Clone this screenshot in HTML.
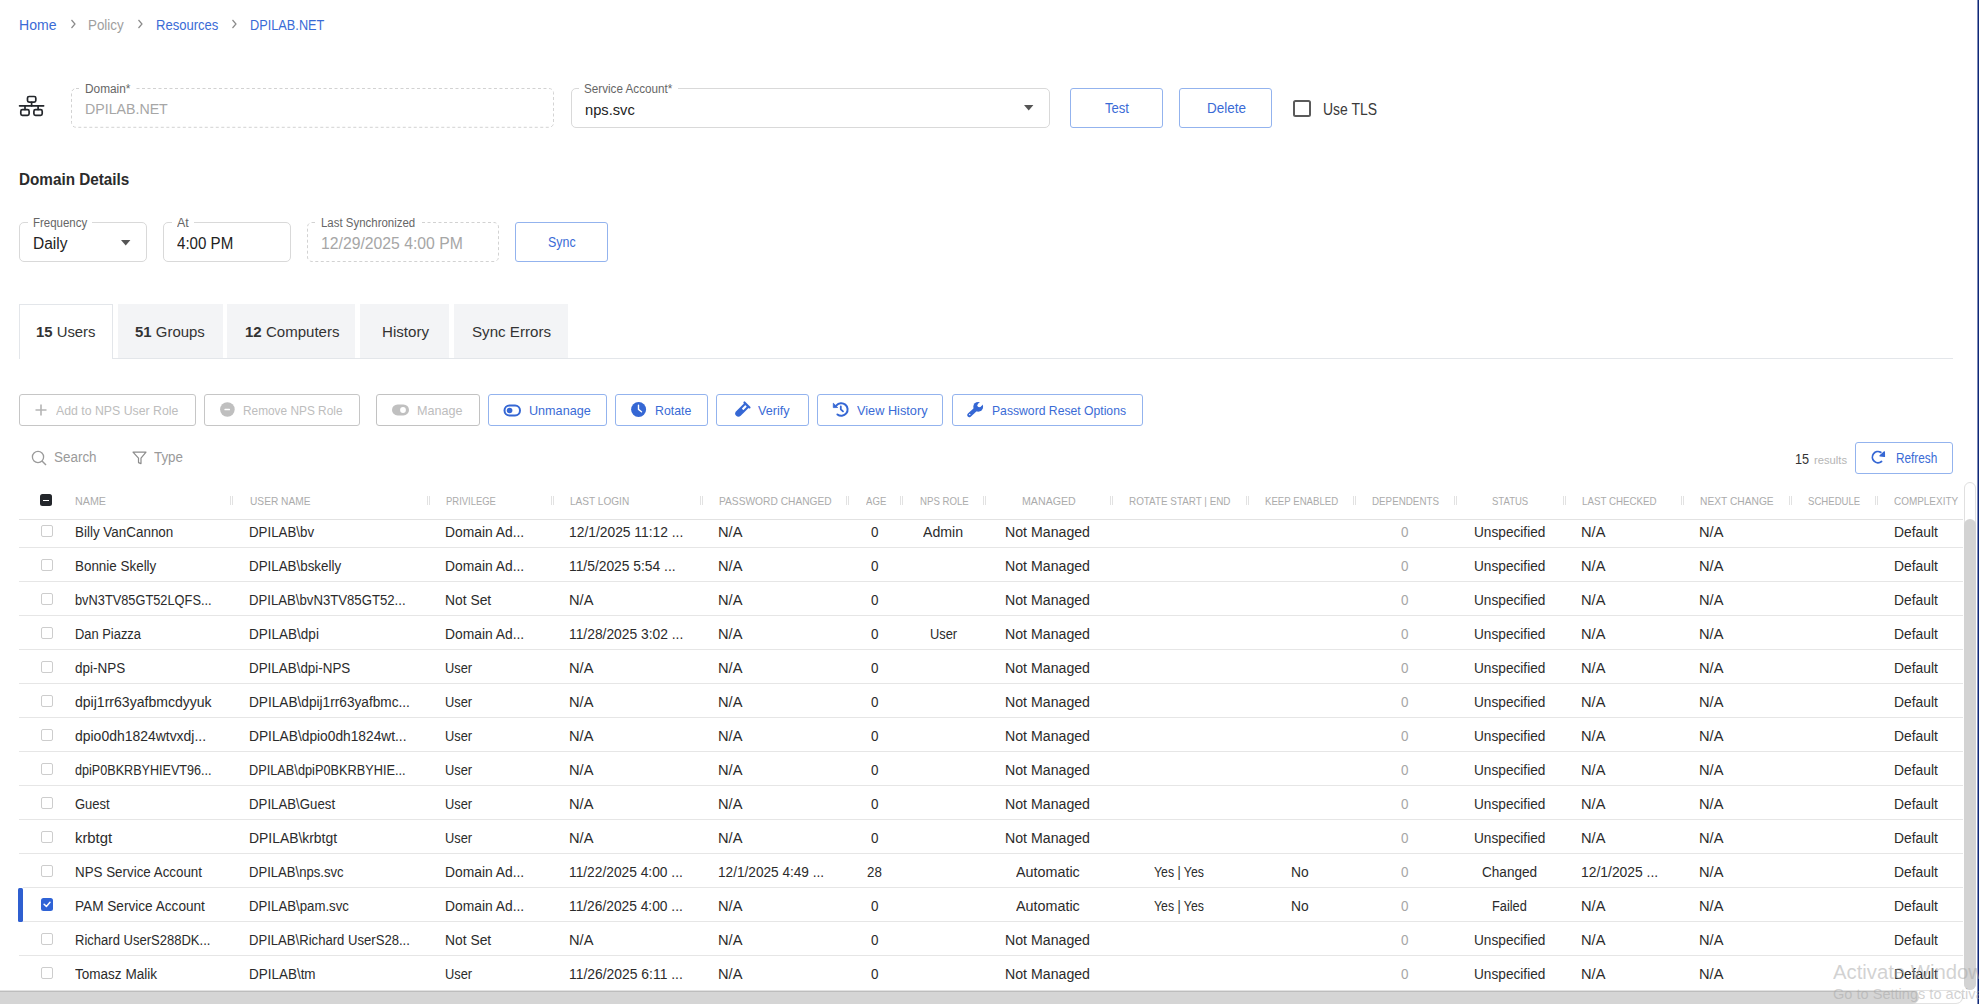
<!DOCTYPE html>
<html><head><meta charset="utf-8"><style>
html,body{margin:0;padding:0;background:#fff;}
body{width:1979px;height:1004px;overflow:hidden;position:relative;font-family:"Liberation Sans", sans-serif;}
b{font-weight:700}
</style></head><body>
<div id="t0" style="position:absolute;left:19.20px;top:17.95px;font-size:14px;line-height:14px;color:#3a6bd6;font-weight:400;white-space:nowrap;transform:scaleX(1.0038);transform-origin:0 0;">Home</div>
<div id="t1" style="position:absolute;left:88.00px;top:17.95px;font-size:14px;line-height:14px;color:#9e9e9e;font-weight:400;white-space:nowrap;transform:scaleX(0.9556);transform-origin:0 0;">Policy</div>
<div id="t2" style="position:absolute;left:155.50px;top:17.95px;font-size:14px;line-height:14px;color:#3a6bd6;font-weight:400;white-space:nowrap;transform:scaleX(0.9324);transform-origin:0 0;">Resources</div>
<div id="t3" style="position:absolute;left:249.50px;top:17.95px;font-size:14px;line-height:14px;color:#3a6bd6;font-weight:400;white-space:nowrap;transform:scaleX(0.9106);transform-origin:0 0;">DPILAB.NET</div>
<svg style="position:absolute;left:69px;top:18px" width="8" height="12" viewBox="0 0 8 12"><path d="M2.5 2 L6 6 L2.5 10" fill="none" stroke="#8a8a8a" stroke-width="1.2"/></svg>
<svg style="position:absolute;left:136px;top:18px" width="8" height="12" viewBox="0 0 8 12"><path d="M2.5 2 L6 6 L2.5 10" fill="none" stroke="#8a8a8a" stroke-width="1.2"/></svg>
<svg style="position:absolute;left:229.5px;top:18px" width="8" height="12" viewBox="0 0 8 12"><path d="M2.5 2 L6 6 L2.5 10" fill="none" stroke="#8a8a8a" stroke-width="1.2"/></svg>
<svg style="position:absolute;left:14px;top:90px" width="36" height="32" viewBox="0 0 36 32"><g fill="none" stroke="#23262b" stroke-width="1.7" stroke-linecap="round" transform="translate(-14,-90)">
<rect x="27.5" y="96.5" width="8.3" height="5.6" rx="1.6"/>
<line x1="31.6" y1="102.3" x2="31.6" y2="105.8"/>
<line x1="19.6" y1="105.8" x2="43.6" y2="105.8"/>
<line x1="25" y1="105.8" x2="25" y2="109.4"/>
<line x1="38.1" y1="105.8" x2="38.1" y2="109.4"/>
<rect x="20.8" y="109.6" width="8.3" height="5.7" rx="1.6"/>
<rect x="33.9" y="109.6" width="8.3" height="5.7" rx="1.6"/>
</g></svg>
<svg style="position:absolute;left:70.7px;top:88px" width="483.09999999999997" height="39.8" viewBox="0 0 483.09999999999997 39.8"><rect x="0.5" y="0.5" width="482.1" height="38.8" rx="4.5" fill="none" stroke="#d2d2d2" stroke-width="1" stroke-dasharray="3 2.5"/></svg>
<div style="position:absolute;left:80.4px;top:86px;width:55.400000000000006px;height:5px;box-sizing:border-box;background:#fff;"></div>
<div id="t4" style="position:absolute;left:85.40px;top:82.84px;font-size:12px;line-height:12px;color:#666;font-weight:400;white-space:nowrap;transform:scaleX(0.9863);transform-origin:0 0;">Domain*</div>
<div id="t5" style="position:absolute;left:85.40px;top:101.30px;font-size:15px;line-height:15px;color:#a6a6a6;font-weight:400;white-space:nowrap;transform:scaleX(0.9459);transform-origin:0 0;">DPILAB.NET</div>
<div style="position:absolute;left:570.5px;top:88px;width:479.0999999999999px;height:39.8px;box-sizing:border-box;border:1px solid #d9d9d9;border-radius:5px;"></div>
<div style="position:absolute;left:579.3px;top:86px;width:98.29999999999995px;height:5px;box-sizing:border-box;background:#fff;"></div>
<div id="t6" style="position:absolute;left:584.30px;top:82.84px;font-size:12px;line-height:12px;color:#666;font-weight:400;white-space:nowrap;transform:scaleX(0.9733);transform-origin:0 0;">Service Account*</div>
<div id="t7" style="position:absolute;left:584.80px;top:101.50px;font-size:15px;line-height:15px;color:#222;font-weight:400;white-space:nowrap;transform:scaleX(0.9792);transform-origin:0 0;">nps.svc</div>
<svg style="position:absolute;left:1024px;top:105px" width="10" height="6" viewBox="0 0 10 6"><path d="M0 0 L9.4 0 L4.7 5.4 Z" fill="#555"/></svg>
<div style="position:absolute;left:1070px;top:88px;width:93px;height:40px;box-sizing:border-box;border:1.3px solid #93b3ee;border-radius:3px;"></div>
<div id="t8" style="position:absolute;left:1105.00px;top:100.75px;font-size:14px;line-height:14px;color:#3a6bd6;font-weight:400;white-space:nowrap;transform:scaleX(0.9343);transform-origin:0 0;">Test</div>
<div style="position:absolute;left:1179px;top:88px;width:93px;height:40px;box-sizing:border-box;border:1.3px solid #93b3ee;border-radius:3px;"></div>
<div id="t9" style="position:absolute;left:1206.50px;top:100.75px;font-size:14px;line-height:14px;color:#3a6bd6;font-weight:400;white-space:nowrap;transform:scaleX(0.9637);transform-origin:0 0;">Delete</div>
<div style="position:absolute;left:1293px;top:100px;width:17.59999999999991px;height:17.400000000000006px;box-sizing:border-box;border:2px solid #5a5a5a;border-radius:2.5px;"></div>
<div id="t10" style="position:absolute;left:1322.80px;top:101.99px;font-size:15.6px;line-height:15.6px;color:#3a3a3a;font-weight:400;white-space:nowrap;transform:scaleX(0.8942);transform-origin:0 0;">Use TLS</div>
<div id="t11" style="position:absolute;left:19.10px;top:172.06px;font-size:16px;line-height:16px;color:#2b2b2b;font-weight:700;white-space:nowrap;transform:scaleX(0.9542);transform-origin:0 0;">Domain Details</div>
<div style="position:absolute;left:19px;top:222px;width:128px;height:40px;box-sizing:border-box;border:1px solid #d9d9d9;border-radius:5px;"></div>
<div style="position:absolute;left:27.700000000000003px;top:220px;width:64.2px;height:5px;box-sizing:border-box;background:#fff;"></div>
<div id="t12" style="position:absolute;left:32.70px;top:216.84px;font-size:12px;line-height:12px;color:#666;font-weight:400;white-space:nowrap;transform:scaleX(0.9559);transform-origin:0 0;">Frequency</div>
<div id="t13" style="position:absolute;left:32.70px;top:235.76px;font-size:16px;line-height:16px;color:#222;font-weight:400;white-space:nowrap;transform:scaleX(0.9701);transform-origin:0 0;">Daily</div>
<svg style="position:absolute;left:121px;top:239.7px" width="10" height="6" viewBox="0 0 10 6"><path d="M0 0 L9.4 0 L4.7 5.4 Z" fill="#555"/></svg>
<div style="position:absolute;left:163px;top:222px;width:128px;height:40px;box-sizing:border-box;border:1px solid #d9d9d9;border-radius:5px;"></div>
<div style="position:absolute;left:172px;top:220px;width:21.80000000000001px;height:5px;box-sizing:border-box;background:#fff;"></div>
<div id="t14" style="position:absolute;left:177.00px;top:216.84px;font-size:12px;line-height:12px;color:#666;font-weight:400;white-space:nowrap;transform:scaleX(1.0402);transform-origin:0 0;">At</div>
<div id="t15" style="position:absolute;left:177.00px;top:235.76px;font-size:16px;line-height:16px;color:#222;font-weight:400;white-space:nowrap;transform:scaleX(0.9431);transform-origin:0 0;">4:00 PM</div>
<svg style="position:absolute;left:307px;top:222px" width="192" height="40" viewBox="0 0 192 40"><rect x="0.5" y="0.5" width="191.0" height="39.0" rx="4.5" fill="none" stroke="#d2d2d2" stroke-width="1" stroke-dasharray="3 2.5"/></svg>
<div style="position:absolute;left:316.2px;top:220px;width:104.19999999999999px;height:5px;box-sizing:border-box;background:#fff;"></div>
<div id="t16" style="position:absolute;left:321.20px;top:216.84px;font-size:12px;line-height:12px;color:#666;font-weight:400;white-space:nowrap;transform:scaleX(0.9541);transform-origin:0 0;">Last Synchronized</div>
<div id="t17" style="position:absolute;left:321.20px;top:235.76px;font-size:16px;line-height:16px;color:#a6a6a6;font-weight:400;white-space:nowrap;transform:scaleX(0.9840);transform-origin:0 0;">12/29/2025 4:00 PM</div>
<div style="position:absolute;left:515px;top:222px;width:93px;height:40px;box-sizing:border-box;border:1.3px solid #93b3ee;border-radius:3px;"></div>
<div id="t18" style="position:absolute;left:547.80px;top:234.65px;font-size:14px;line-height:14px;color:#3a6bd6;font-weight:400;white-space:nowrap;transform:scaleX(0.8867);transform-origin:0 0;">Sync</div>
<div style="position:absolute;left:19px;top:357.6px;width:1934px;height:1.1999999999999886px;box-sizing:border-box;background:#e3e6ea;"></div>
<div style="position:absolute;left:19.4px;top:304.4px;width:94.1px;height:54.60000000000002px;box-sizing:border-box;background:#fff;border:1px solid #e3e6ea;border-bottom:none;"></div>
<div style="position:absolute;left:117.9px;top:304.4px;width:104.69999999999999px;height:53.60000000000002px;box-sizing:border-box;background:#f3f4f6;"></div>
<div style="position:absolute;left:227px;top:304.4px;width:128.39999999999998px;height:53.60000000000002px;box-sizing:border-box;background:#f3f4f6;"></div>
<div style="position:absolute;left:360px;top:304.4px;width:89.30000000000001px;height:53.60000000000002px;box-sizing:border-box;background:#f3f4f6;"></div>
<div style="position:absolute;left:454px;top:304.4px;width:113.5px;height:53.60000000000002px;box-sizing:border-box;background:#f3f4f6;"></div>
<div id="t19" style="position:absolute;left:36.10px;top:324.55px;font-size:14px;line-height:14px;color:#333;font-weight:400;white-space:nowrap;transform:scaleX(1.0619);transform-origin:0 0;"><b>15</b> Users</div>
<div id="t20" style="position:absolute;left:135.00px;top:324.55px;font-size:14px;line-height:14px;color:#333;font-weight:400;white-space:nowrap;transform:scaleX(1.0674);transform-origin:0 0;"><b>51</b> Groups</div>
<div id="t21" style="position:absolute;left:244.50px;top:324.55px;font-size:14px;line-height:14px;color:#333;font-weight:400;white-space:nowrap;transform:scaleX(1.0746);transform-origin:0 0;"><b>12</b> Computers</div>
<div id="t22" style="position:absolute;left:381.50px;top:324.55px;font-size:14px;line-height:14px;color:#333;font-weight:400;white-space:nowrap;transform:scaleX(1.0789);transform-origin:0 0;">History</div>
<div id="t23" style="position:absolute;left:471.50px;top:324.55px;font-size:14px;line-height:14px;color:#333;font-weight:400;white-space:nowrap;transform:scaleX(1.0803);transform-origin:0 0;">Sync Errors</div>
<div style="position:absolute;left:19px;top:394px;width:177px;height:32px;box-sizing:border-box;border:1.3px solid #c6c6c6;border-radius:3px;"></div>
<div id="t24" style="position:absolute;left:56.40px;top:404.00px;font-size:13px;line-height:13px;color:#bdbdbd;font-weight:400;white-space:nowrap;transform:scaleX(0.9463);transform-origin:0 0;">Add to NPS User Role</div>
<svg style="position:absolute;left:34px;top:403px" width="14" height="14" viewBox="0 0 14 14"><path d="M7 1.5 V12.5 M1.5 7 H12.5" stroke="#b5b5b5" stroke-width="1.6" fill="none"/></svg>
<div style="position:absolute;left:204px;top:394px;width:156px;height:32px;box-sizing:border-box;border:1.3px solid #c6c6c6;border-radius:3px;"></div>
<svg style="position:absolute;left:218px;top:400px" width="20" height="20" viewBox="0 0 20 20"><circle cx="9.4" cy="9.5" r="7.3" fill="#bfbfbf"/><rect x="6.4" y="8.7" width="5.6" height="1.6" rx="0.6" fill="#fff"/></svg>
<div id="t25" style="position:absolute;left:243.40px;top:404.00px;font-size:13px;line-height:13px;color:#bdbdbd;font-weight:400;white-space:nowrap;transform:scaleX(0.9119);transform-origin:0 0;">Remove NPS Role</div>
<div style="position:absolute;left:376px;top:394px;width:104px;height:32px;box-sizing:border-box;border:1.3px solid #c2c2c2;border-radius:3px;"></div>
<svg style="position:absolute;left:391px;top:403.5px" width="19" height="12" viewBox="0 0 19 12"><rect x="1" y="0.4" width="17" height="11.1" rx="5.55" fill="#c0c0c0"/><circle cx="12" cy="6" r="2.9" fill="#fff"/></svg>
<div id="t26" style="position:absolute;left:417.30px;top:404.00px;font-size:13px;line-height:13px;color:#bdbdbd;font-weight:400;white-space:nowrap;transform:scaleX(0.9684);transform-origin:0 0;">Manage</div>
<div style="position:absolute;left:488px;top:394px;width:119px;height:32px;box-sizing:border-box;border:1.3px solid #93b3ee;border-radius:3px;"></div>
<svg style="position:absolute;left:503px;top:403.5px" width="19" height="13" viewBox="0 0 19 13"><rect x="1.5" y="1.5" width="15.5" height="10" rx="5" fill="none" stroke="#3567d4" stroke-width="2"/><circle cx="6.6" cy="6.5" r="2.8" fill="#3567d4"/></svg>
<div id="t27" style="position:absolute;left:528.80px;top:404.00px;font-size:13px;line-height:13px;color:#3a6bd6;font-weight:400;white-space:nowrap;transform:scaleX(0.9700);transform-origin:0 0;">Unmanage</div>
<div style="position:absolute;left:615px;top:394px;width:93px;height:32px;box-sizing:border-box;border:1.3px solid #93b3ee;border-radius:3px;"></div>
<svg style="position:absolute;left:624px;top:398px" width="32" height="24" viewBox="0 0 32 24"><circle cx="14.6" cy="11.5" r="7.5" fill="#3567d4"/><path d="M14.5 7.1 V11.4 L17.5 13.7" stroke="#fff" stroke-width="1.4" fill="none" stroke-linecap="round" stroke-linejoin="round"/></svg>
<div id="t28" style="position:absolute;left:654.70px;top:404.00px;font-size:13px;line-height:13px;color:#3a6bd6;font-weight:400;white-space:nowrap;transform:scaleX(0.9475);transform-origin:0 0;">Rotate</div>
<div style="position:absolute;left:716px;top:394px;width:93px;height:32px;box-sizing:border-box;border:1.3px solid #93b3ee;border-radius:3px;"></div>
<svg style="position:absolute;left:728px;top:398px" width="32" height="24" viewBox="0 0 32 24"><g transform="translate(19,6.9) rotate(45)"><rect x="-4.6" y="-1" width="9.2" height="2.1" rx="1" fill="#3567d4"/><path d="M-3.2 0 V12.1 A3.2 3.2 0 0 0 3.2 12.1 V0 Z" fill="#3567d4"/><rect x="-1.1" y="1.3" width="2.2" height="5" rx="0.6" fill="#fff"/></g></svg>
<div id="t29" style="position:absolute;left:758.40px;top:404.00px;font-size:13px;line-height:13px;color:#3a6bd6;font-weight:400;white-space:nowrap;transform:scaleX(0.9718);transform-origin:0 0;">Verify</div>
<div style="position:absolute;left:817px;top:394px;width:126px;height:32px;box-sizing:border-box;border:1.3px solid #93b3ee;border-radius:3px;"></div>
<svg style="position:absolute;left:826px;top:398px" width="32" height="24" viewBox="0 0 32 24"><path d="M11.42 16.46 A6.3 6.3 0 1 0 10.47 7.45" fill="none" stroke="#3567d4" stroke-width="2" stroke-linecap="round"/><path d="M7.3 5.2 L7.3 9.6 L11.7 9.5 Z" fill="#3567d4" stroke="#3567d4" stroke-width="0.8" stroke-linejoin="round"/><path d="M14.8 8.4 V11.3 L17 13.4" fill="none" stroke="#3567d4" stroke-width="1.8" stroke-linecap="round" stroke-linejoin="round"/></svg>
<div id="t30" style="position:absolute;left:856.70px;top:404.00px;font-size:13px;line-height:13px;color:#3a6bd6;font-weight:400;white-space:nowrap;transform:scaleX(0.9790);transform-origin:0 0;">View History</div>
<div style="position:absolute;left:952px;top:394px;width:191px;height:32px;box-sizing:border-box;border:1.3px solid #93b3ee;border-radius:3px;"></div>
<svg style="position:absolute;left:960px;top:398px" width="32" height="24" viewBox="0 0 32 24"><circle cx="18.2" cy="8.8" r="4.9" fill="#3567d4"/><line x1="9.3" y1="17.1" x2="16" y2="11" stroke="#3567d4" stroke-width="4.2" stroke-linecap="round"/><circle cx="19.3" cy="7.3" r="1.9" fill="#fff"/><line x1="19.3" y1="7.3" x2="24" y2="2.6" stroke="#fff" stroke-width="3.8"/><circle cx="9.7" cy="16.5" r="0.8" fill="#dfe7fa"/></svg>
<div id="t31" style="position:absolute;left:991.70px;top:404.00px;font-size:13px;line-height:13px;color:#3a6bd6;font-weight:400;white-space:nowrap;transform:scaleX(0.9366);transform-origin:0 0;">Password Reset Options</div>
<svg style="position:absolute;left:31px;top:450px" width="17" height="17" viewBox="0 0 17 17"><circle cx="7" cy="7" r="5.6" fill="none" stroke="#9a9a9a" stroke-width="1.3"/><path d="M11 11 L15 15" stroke="#9a9a9a" stroke-width="1.4"/></svg>
<div id="t32" style="position:absolute;left:54.40px;top:449.85px;font-size:14px;line-height:14px;color:#9a9a9a;font-weight:400;white-space:nowrap;transform:scaleX(0.9603);transform-origin:0 0;">Search</div>
<svg style="position:absolute;left:132px;top:451px" width="16" height="14" viewBox="0 0 16 14"><path d="M1 1.2 H14 L9 7.2 V12.6 L6.5 11.6 V7.2 Z" fill="none" stroke="#8c8c8c" stroke-width="1.2" stroke-linejoin="round"/></svg>
<div id="t33" style="position:absolute;left:153.90px;top:449.85px;font-size:14px;line-height:14px;color:#9a9a9a;font-weight:400;white-space:nowrap;transform:scaleX(0.9552);transform-origin:0 0;">Type</div>
<div id="t34" style="position:absolute;left:1795.00px;top:452.25px;font-size:14px;line-height:14px;color:#333;font-weight:400;white-space:nowrap;transform:scaleX(0.9051);transform-origin:0 0;">15</div>
<div id="t35" style="position:absolute;left:1813.80px;top:454.79px;font-size:11px;line-height:11px;color:#b5b5b5;font-weight:400;white-space:nowrap;transform:scaleX(1.0183);transform-origin:0 0;">results</div>
<div style="position:absolute;left:1854.5px;top:442.3px;width:98.79999999999995px;height:31.30000000000001px;box-sizing:border-box;border:1.3px solid #93b3ee;border-radius:3px;"></div>
<svg style="position:absolute;left:1864px;top:444px" width="32" height="26" viewBox="0 0 32 26"><path d="M17.52 17.55 A5.6 5.6 0 1 1 16.8 8.35" fill="none" stroke="#3567d4" stroke-width="1.8" stroke-linecap="round"/><path d="M16 11.8 L20.5 12.4 L20.4 7.8 Z" fill="#3567d4" stroke="#3567d4" stroke-width="1.2" stroke-linejoin="round"/></svg>
<div id="t36" style="position:absolute;left:1895.50px;top:451.35px;font-size:14px;line-height:14px;color:#3a6bd6;font-weight:400;white-space:nowrap;transform:scaleX(0.8423);transform-origin:0 0;">Refresh</div>
<div style="position:absolute;left:39.8px;top:494.1px;width:12.200000000000003px;height:12.399999999999977px;box-sizing:border-box;background:#23262b;border-radius:2.5px;"></div>
<div style="position:absolute;left:43px;top:499.5px;width:5.799999999999997px;height:1.5px;box-sizing:border-box;background:#fff;"></div>
<div id="t37" style="position:absolute;left:75.40px;top:495.99px;font-size:11px;line-height:11px;color:#ababab;font-weight:400;white-space:nowrap;transform:scaleX(0.9754);transform-origin:0 0;">NAME</div>
<div id="t38" style="position:absolute;left:249.60px;top:495.99px;font-size:11px;line-height:11px;color:#ababab;font-weight:400;white-space:nowrap;transform:scaleX(0.9250);transform-origin:0 0;">USER NAME</div>
<div id="t39" style="position:absolute;left:445.60px;top:495.99px;font-size:11px;line-height:11px;color:#ababab;font-weight:400;white-space:nowrap;transform:scaleX(0.8592);transform-origin:0 0;">PRIVILEGE</div>
<div id="t40" style="position:absolute;left:570.00px;top:495.99px;font-size:11px;line-height:11px;color:#ababab;font-weight:400;white-space:nowrap;transform:scaleX(0.9163);transform-origin:0 0;">LAST LOGIN</div>
<div id="t41" style="position:absolute;left:718.80px;top:495.99px;font-size:11px;line-height:11px;color:#ababab;font-weight:400;white-space:nowrap;transform:scaleX(0.9282);transform-origin:0 0;">PASSWORD CHANGED</div>
<div id="t42" style="position:absolute;left:865.50px;top:495.99px;font-size:11px;line-height:11px;color:#ababab;font-weight:400;white-space:nowrap;transform:scaleX(0.8737);transform-origin:0 0;">AGE</div>
<div id="t43" style="position:absolute;left:919.70px;top:495.99px;font-size:11px;line-height:11px;color:#ababab;font-weight:400;white-space:nowrap;transform:scaleX(0.8771);transform-origin:0 0;">NPS ROLE</div>
<div id="t44" style="position:absolute;left:1022.00px;top:495.99px;font-size:11px;line-height:11px;color:#ababab;font-weight:400;white-space:nowrap;transform:scaleX(0.9672);transform-origin:0 0;">MANAGED</div>
<div id="t45" style="position:absolute;left:1129.00px;top:495.99px;font-size:11px;line-height:11px;color:#ababab;font-weight:400;white-space:nowrap;transform:scaleX(0.8976);transform-origin:0 0;">ROTATE START | END</div>
<div id="t46" style="position:absolute;left:1264.80px;top:495.99px;font-size:11px;line-height:11px;color:#ababab;font-weight:400;white-space:nowrap;transform:scaleX(0.8760);transform-origin:0 0;">KEEP ENABLED</div>
<div id="t47" style="position:absolute;left:1372.00px;top:495.99px;font-size:11px;line-height:11px;color:#ababab;font-weight:400;white-space:nowrap;transform:scaleX(0.8911);transform-origin:0 0;">DEPENDENTS</div>
<div id="t48" style="position:absolute;left:1492.30px;top:495.99px;font-size:11px;line-height:11px;color:#ababab;font-weight:400;white-space:nowrap;transform:scaleX(0.8667);transform-origin:0 0;">STATUS</div>
<div id="t49" style="position:absolute;left:1582.00px;top:495.99px;font-size:11px;line-height:11px;color:#ababab;font-weight:400;white-space:nowrap;transform:scaleX(0.8864);transform-origin:0 0;">LAST CHECKED</div>
<div id="t50" style="position:absolute;left:1700.00px;top:495.99px;font-size:11px;line-height:11px;color:#ababab;font-weight:400;white-space:nowrap;transform:scaleX(0.9298);transform-origin:0 0;">NEXT CHANGE</div>
<div id="t51" style="position:absolute;left:1807.80px;top:495.99px;font-size:11px;line-height:11px;color:#ababab;font-weight:400;white-space:nowrap;transform:scaleX(0.8714);transform-origin:0 0;">SCHEDULE</div>
<div id="t52" style="position:absolute;left:1893.60px;top:495.99px;font-size:11px;line-height:11px;color:#ababab;font-weight:400;white-space:nowrap;transform:scaleX(0.9040);transform-origin:0 0;">COMPLEXITY</div>
<div style="position:absolute;left:229.5px;top:496px;width:1.0px;height:9px;box-sizing:border-box;background:#e2e2e2;"></div>
<div style="position:absolute;left:231.5px;top:496px;width:1.0px;height:9px;box-sizing:border-box;background:#e2e2e2;"></div>
<div style="position:absolute;left:426.6px;top:496px;width:1.0px;height:9px;box-sizing:border-box;background:#e2e2e2;"></div>
<div style="position:absolute;left:428.6px;top:496px;width:1.0px;height:9px;box-sizing:border-box;background:#e2e2e2;"></div>
<div style="position:absolute;left:551.0px;top:496px;width:1.0px;height:9px;box-sizing:border-box;background:#e2e2e2;"></div>
<div style="position:absolute;left:553.0px;top:496px;width:1.0px;height:9px;box-sizing:border-box;background:#e2e2e2;"></div>
<div style="position:absolute;left:699.9px;top:496px;width:1.0px;height:9px;box-sizing:border-box;background:#e2e2e2;"></div>
<div style="position:absolute;left:701.9px;top:496px;width:1.0px;height:9px;box-sizing:border-box;background:#e2e2e2;"></div>
<div style="position:absolute;left:846.3px;top:496px;width:1.0px;height:9px;box-sizing:border-box;background:#e2e2e2;"></div>
<div style="position:absolute;left:848.3px;top:496px;width:1.0px;height:9px;box-sizing:border-box;background:#e2e2e2;"></div>
<div style="position:absolute;left:900.3px;top:496px;width:1.0px;height:9px;box-sizing:border-box;background:#e2e2e2;"></div>
<div style="position:absolute;left:902.3px;top:496px;width:1.0px;height:9px;box-sizing:border-box;background:#e2e2e2;"></div>
<div style="position:absolute;left:983.4px;top:496px;width:1.0px;height:9px;box-sizing:border-box;background:#e2e2e2;"></div>
<div style="position:absolute;left:985.4px;top:496px;width:1.0px;height:9px;box-sizing:border-box;background:#e2e2e2;"></div>
<div style="position:absolute;left:1109.5px;top:496px;width:1.0px;height:9px;box-sizing:border-box;background:#e2e2e2;"></div>
<div style="position:absolute;left:1111.5px;top:496px;width:1.0px;height:9px;box-sizing:border-box;background:#e2e2e2;"></div>
<div style="position:absolute;left:1246.0px;top:496px;width:1.0px;height:9px;box-sizing:border-box;background:#e2e2e2;"></div>
<div style="position:absolute;left:1248.0px;top:496px;width:1.0px;height:9px;box-sizing:border-box;background:#e2e2e2;"></div>
<div style="position:absolute;left:1352.5px;top:496px;width:1.0px;height:9px;box-sizing:border-box;background:#e2e2e2;"></div>
<div style="position:absolute;left:1354.5px;top:496px;width:1.0px;height:9px;box-sizing:border-box;background:#e2e2e2;"></div>
<div style="position:absolute;left:1453.5px;top:496px;width:1.0px;height:9px;box-sizing:border-box;background:#e2e2e2;"></div>
<div style="position:absolute;left:1455.5px;top:496px;width:1.0px;height:9px;box-sizing:border-box;background:#e2e2e2;"></div>
<div style="position:absolute;left:1562.5px;top:496px;width:1.0px;height:9px;box-sizing:border-box;background:#e2e2e2;"></div>
<div style="position:absolute;left:1564.5px;top:496px;width:1.0px;height:9px;box-sizing:border-box;background:#e2e2e2;"></div>
<div style="position:absolute;left:1680.5px;top:496px;width:1.0px;height:9px;box-sizing:border-box;background:#e2e2e2;"></div>
<div style="position:absolute;left:1682.5px;top:496px;width:1.0px;height:9px;box-sizing:border-box;background:#e2e2e2;"></div>
<div style="position:absolute;left:1788.5px;top:496px;width:1.0px;height:9px;box-sizing:border-box;background:#e2e2e2;"></div>
<div style="position:absolute;left:1790.5px;top:496px;width:1.0px;height:9px;box-sizing:border-box;background:#e2e2e2;"></div>
<div style="position:absolute;left:1875.0px;top:496px;width:1.0px;height:9px;box-sizing:border-box;background:#e2e2e2;"></div>
<div style="position:absolute;left:1877.0px;top:496px;width:1.0px;height:9px;box-sizing:border-box;background:#e2e2e2;"></div>
<div style="position:absolute;left:19px;top:519px;width:1944px;height:1px;box-sizing:border-box;background:#e2e2e2;"></div>
<div style="position:absolute;left:40.9px;top:524.8px;width:12.0px;height:12.0px;box-sizing:border-box;border:1.3px solid #cdcdcd;border-radius:2px;"></div>
<div style="position:absolute;left:19px;top:547px;width:1944px;height:1px;box-sizing:border-box;background:#e6e6e6;"></div>
<div id="t53" style="position:absolute;left:74.70px;top:524.95px;font-size:14px;line-height:14px;color:#2b2b2b;font-weight:400;white-space:nowrap;transform:scaleX(0.9592);transform-origin:0 0;">Billy VanCannon</div>
<div id="t54" style="position:absolute;left:248.80px;top:524.95px;font-size:14px;line-height:14px;color:#2b2b2b;font-weight:400;white-space:nowrap;transform:scaleX(0.9506);transform-origin:0 0;">DPILAB\bv</div>
<div id="t55" style="position:absolute;left:445.00px;top:524.95px;font-size:14px;line-height:14px;color:#2b2b2b;font-weight:400;white-space:nowrap;transform:scaleX(0.9881);transform-origin:0 0;">Domain Ad...</div>
<div id="t56" style="position:absolute;left:569.20px;top:524.95px;font-size:14px;line-height:14px;color:#2b2b2b;font-weight:400;white-space:nowrap;transform:scaleX(0.9876);transform-origin:0 0;">12/1/2025 11:12 ...</div>
<div id="t57" style="position:absolute;left:718.30px;top:524.95px;font-size:14px;line-height:14px;color:#2b2b2b;font-weight:400;white-space:nowrap;transform:scaleX(1.0452);transform-origin:0 0;">N/A</div>
<div id="t58" style="position:absolute;left:870.85px;top:524.95px;font-size:14px;line-height:14px;color:#2b2b2b;font-weight:400;white-space:nowrap;transform:scaleX(0.9619);transform-origin:0 0;">0</div>
<div id="t59" style="position:absolute;left:923.05px;top:524.95px;font-size:14px;line-height:14px;color:#2b2b2b;font-weight:400;white-space:nowrap;transform:scaleX(1.0104);transform-origin:0 0;">Admin</div>
<div id="t60" style="position:absolute;left:1005.40px;top:524.95px;font-size:14px;line-height:14px;color:#2b2b2b;font-weight:400;white-space:nowrap;transform:scaleX(1.0112);transform-origin:0 0;">Not Managed</div>
<div id="t61" style="position:absolute;left:1400.85px;top:524.95px;font-size:14px;line-height:14px;color:#a6a6a6;font-weight:400;white-space:nowrap;transform:scaleX(0.9619);transform-origin:0 0;">0</div>
<div id="t62" style="position:absolute;left:1473.50px;top:524.95px;font-size:14px;line-height:14px;color:#2b2b2b;font-weight:400;white-space:nowrap;transform:scaleX(0.9760);transform-origin:0 0;">Unspecified</div>
<div id="t63" style="position:absolute;left:1581.30px;top:524.95px;font-size:14px;line-height:14px;color:#2b2b2b;font-weight:400;white-space:nowrap;transform:scaleX(1.0452);transform-origin:0 0;">N/A</div>
<div id="t64" style="position:absolute;left:1699.30px;top:524.95px;font-size:14px;line-height:14px;color:#2b2b2b;font-weight:400;white-space:nowrap;transform:scaleX(1.0452);transform-origin:0 0;">N/A</div>
<div id="t65" style="position:absolute;left:1893.60px;top:524.95px;font-size:14px;line-height:14px;color:#2b2b2b;font-weight:400;white-space:nowrap;transform:scaleX(0.9896);transform-origin:0 0;">Default</div>
<div style="position:absolute;left:40.9px;top:558.8px;width:12.0px;height:12.0px;box-sizing:border-box;border:1.3px solid #cdcdcd;border-radius:2px;"></div>
<div style="position:absolute;left:19px;top:581px;width:1944px;height:1px;box-sizing:border-box;background:#e6e6e6;"></div>
<div id="t66" style="position:absolute;left:74.70px;top:558.95px;font-size:14px;line-height:14px;color:#2b2b2b;font-weight:400;white-space:nowrap;transform:scaleX(0.9584);transform-origin:0 0;">Bonnie Skelly</div>
<div id="t67" style="position:absolute;left:248.80px;top:558.95px;font-size:14px;line-height:14px;color:#2b2b2b;font-weight:400;white-space:nowrap;transform:scaleX(0.9546);transform-origin:0 0;">DPILAB\bskelly</div>
<div id="t68" style="position:absolute;left:445.00px;top:558.95px;font-size:14px;line-height:14px;color:#2b2b2b;font-weight:400;white-space:nowrap;transform:scaleX(0.9881);transform-origin:0 0;">Domain Ad...</div>
<div id="t69" style="position:absolute;left:569.20px;top:558.95px;font-size:14px;line-height:14px;color:#2b2b2b;font-weight:400;white-space:nowrap;transform:scaleX(0.9875);transform-origin:0 0;">11/5/2025 5:54 ...</div>
<div id="t70" style="position:absolute;left:718.30px;top:558.95px;font-size:14px;line-height:14px;color:#2b2b2b;font-weight:400;white-space:nowrap;transform:scaleX(1.0452);transform-origin:0 0;">N/A</div>
<div id="t71" style="position:absolute;left:870.85px;top:558.95px;font-size:14px;line-height:14px;color:#2b2b2b;font-weight:400;white-space:nowrap;transform:scaleX(0.9619);transform-origin:0 0;">0</div>
<div id="t72" style="position:absolute;left:1005.40px;top:558.95px;font-size:14px;line-height:14px;color:#2b2b2b;font-weight:400;white-space:nowrap;transform:scaleX(1.0112);transform-origin:0 0;">Not Managed</div>
<div id="t73" style="position:absolute;left:1400.85px;top:558.95px;font-size:14px;line-height:14px;color:#a6a6a6;font-weight:400;white-space:nowrap;transform:scaleX(0.9619);transform-origin:0 0;">0</div>
<div id="t74" style="position:absolute;left:1473.50px;top:558.95px;font-size:14px;line-height:14px;color:#2b2b2b;font-weight:400;white-space:nowrap;transform:scaleX(0.9760);transform-origin:0 0;">Unspecified</div>
<div id="t75" style="position:absolute;left:1581.30px;top:558.95px;font-size:14px;line-height:14px;color:#2b2b2b;font-weight:400;white-space:nowrap;transform:scaleX(1.0452);transform-origin:0 0;">N/A</div>
<div id="t76" style="position:absolute;left:1699.30px;top:558.95px;font-size:14px;line-height:14px;color:#2b2b2b;font-weight:400;white-space:nowrap;transform:scaleX(1.0452);transform-origin:0 0;">N/A</div>
<div id="t77" style="position:absolute;left:1893.60px;top:558.95px;font-size:14px;line-height:14px;color:#2b2b2b;font-weight:400;white-space:nowrap;transform:scaleX(0.9896);transform-origin:0 0;">Default</div>
<div style="position:absolute;left:40.9px;top:592.8px;width:12.0px;height:12.0px;box-sizing:border-box;border:1.3px solid #cdcdcd;border-radius:2px;"></div>
<div style="position:absolute;left:19px;top:615px;width:1944px;height:1px;box-sizing:border-box;background:#e6e6e6;"></div>
<div id="t78" style="position:absolute;left:74.70px;top:592.95px;font-size:14px;line-height:14px;color:#2b2b2b;font-weight:400;white-space:nowrap;transform:scaleX(0.9143);transform-origin:0 0;">bvN3TV85GT52LQFS...</div>
<div id="t79" style="position:absolute;left:248.80px;top:592.95px;font-size:14px;line-height:14px;color:#2b2b2b;font-weight:400;white-space:nowrap;transform:scaleX(0.9404);transform-origin:0 0;">DPILAB\bvN3TV85GT52...</div>
<div id="t80" style="position:absolute;left:445.00px;top:592.95px;font-size:14px;line-height:14px;color:#2b2b2b;font-weight:400;white-space:nowrap;transform:scaleX(0.9892);transform-origin:0 0;">Not Set</div>
<div id="t81" style="position:absolute;left:569.20px;top:592.95px;font-size:14px;line-height:14px;color:#2b2b2b;font-weight:400;white-space:nowrap;transform:scaleX(1.0452);transform-origin:0 0;">N/A</div>
<div id="t82" style="position:absolute;left:718.30px;top:592.95px;font-size:14px;line-height:14px;color:#2b2b2b;font-weight:400;white-space:nowrap;transform:scaleX(1.0452);transform-origin:0 0;">N/A</div>
<div id="t83" style="position:absolute;left:870.85px;top:592.95px;font-size:14px;line-height:14px;color:#2b2b2b;font-weight:400;white-space:nowrap;transform:scaleX(0.9619);transform-origin:0 0;">0</div>
<div id="t84" style="position:absolute;left:1005.40px;top:592.95px;font-size:14px;line-height:14px;color:#2b2b2b;font-weight:400;white-space:nowrap;transform:scaleX(1.0112);transform-origin:0 0;">Not Managed</div>
<div id="t85" style="position:absolute;left:1400.85px;top:592.95px;font-size:14px;line-height:14px;color:#a6a6a6;font-weight:400;white-space:nowrap;transform:scaleX(0.9619);transform-origin:0 0;">0</div>
<div id="t86" style="position:absolute;left:1473.50px;top:592.95px;font-size:14px;line-height:14px;color:#2b2b2b;font-weight:400;white-space:nowrap;transform:scaleX(0.9760);transform-origin:0 0;">Unspecified</div>
<div id="t87" style="position:absolute;left:1581.30px;top:592.95px;font-size:14px;line-height:14px;color:#2b2b2b;font-weight:400;white-space:nowrap;transform:scaleX(1.0452);transform-origin:0 0;">N/A</div>
<div id="t88" style="position:absolute;left:1699.30px;top:592.95px;font-size:14px;line-height:14px;color:#2b2b2b;font-weight:400;white-space:nowrap;transform:scaleX(1.0452);transform-origin:0 0;">N/A</div>
<div id="t89" style="position:absolute;left:1893.60px;top:592.95px;font-size:14px;line-height:14px;color:#2b2b2b;font-weight:400;white-space:nowrap;transform:scaleX(0.9896);transform-origin:0 0;">Default</div>
<div style="position:absolute;left:40.9px;top:626.8px;width:12.0px;height:12.0px;box-sizing:border-box;border:1.3px solid #cdcdcd;border-radius:2px;"></div>
<div style="position:absolute;left:19px;top:649px;width:1944px;height:1px;box-sizing:border-box;background:#e6e6e6;"></div>
<div id="t90" style="position:absolute;left:74.70px;top:626.95px;font-size:14px;line-height:14px;color:#2b2b2b;font-weight:400;white-space:nowrap;transform:scaleX(0.9219);transform-origin:0 0;">Dan Piazza</div>
<div id="t91" style="position:absolute;left:248.80px;top:626.95px;font-size:14px;line-height:14px;color:#2b2b2b;font-weight:400;white-space:nowrap;transform:scaleX(0.9658);transform-origin:0 0;">DPILAB\dpi</div>
<div id="t92" style="position:absolute;left:445.00px;top:626.95px;font-size:14px;line-height:14px;color:#2b2b2b;font-weight:400;white-space:nowrap;transform:scaleX(0.9881);transform-origin:0 0;">Domain Ad...</div>
<div id="t93" style="position:absolute;left:569.20px;top:626.95px;font-size:14px;line-height:14px;color:#2b2b2b;font-weight:400;white-space:nowrap;transform:scaleX(0.9876);transform-origin:0 0;">11/28/2025 3:02 ...</div>
<div id="t94" style="position:absolute;left:718.30px;top:626.95px;font-size:14px;line-height:14px;color:#2b2b2b;font-weight:400;white-space:nowrap;transform:scaleX(1.0452);transform-origin:0 0;">N/A</div>
<div id="t95" style="position:absolute;left:870.85px;top:626.95px;font-size:14px;line-height:14px;color:#2b2b2b;font-weight:400;white-space:nowrap;transform:scaleX(0.9619);transform-origin:0 0;">0</div>
<div id="t96" style="position:absolute;left:929.55px;top:626.95px;font-size:14px;line-height:14px;color:#2b2b2b;font-weight:400;white-space:nowrap;transform:scaleX(0.9167);transform-origin:0 0;">User</div>
<div id="t97" style="position:absolute;left:1005.40px;top:626.95px;font-size:14px;line-height:14px;color:#2b2b2b;font-weight:400;white-space:nowrap;transform:scaleX(1.0112);transform-origin:0 0;">Not Managed</div>
<div id="t98" style="position:absolute;left:1400.85px;top:626.95px;font-size:14px;line-height:14px;color:#a6a6a6;font-weight:400;white-space:nowrap;transform:scaleX(0.9619);transform-origin:0 0;">0</div>
<div id="t99" style="position:absolute;left:1473.50px;top:626.95px;font-size:14px;line-height:14px;color:#2b2b2b;font-weight:400;white-space:nowrap;transform:scaleX(0.9760);transform-origin:0 0;">Unspecified</div>
<div id="t100" style="position:absolute;left:1581.30px;top:626.95px;font-size:14px;line-height:14px;color:#2b2b2b;font-weight:400;white-space:nowrap;transform:scaleX(1.0452);transform-origin:0 0;">N/A</div>
<div id="t101" style="position:absolute;left:1699.30px;top:626.95px;font-size:14px;line-height:14px;color:#2b2b2b;font-weight:400;white-space:nowrap;transform:scaleX(1.0452);transform-origin:0 0;">N/A</div>
<div id="t102" style="position:absolute;left:1893.60px;top:626.95px;font-size:14px;line-height:14px;color:#2b2b2b;font-weight:400;white-space:nowrap;transform:scaleX(0.9896);transform-origin:0 0;">Default</div>
<div style="position:absolute;left:40.9px;top:660.8px;width:12.0px;height:12.0px;box-sizing:border-box;border:1.3px solid #cdcdcd;border-radius:2px;"></div>
<div style="position:absolute;left:19px;top:683px;width:1944px;height:1px;box-sizing:border-box;background:#e6e6e6;"></div>
<div id="t103" style="position:absolute;left:74.70px;top:660.95px;font-size:14px;line-height:14px;color:#2b2b2b;font-weight:400;white-space:nowrap;transform:scaleX(0.9628);transform-origin:0 0;">dpi-NPS</div>
<div id="t104" style="position:absolute;left:248.80px;top:660.95px;font-size:14px;line-height:14px;color:#2b2b2b;font-weight:400;white-space:nowrap;transform:scaleX(0.9572);transform-origin:0 0;">DPILAB\dpi-NPS</div>
<div id="t105" style="position:absolute;left:445.00px;top:660.95px;font-size:14px;line-height:14px;color:#2b2b2b;font-weight:400;white-space:nowrap;transform:scaleX(0.9167);transform-origin:0 0;">User</div>
<div id="t106" style="position:absolute;left:569.20px;top:660.95px;font-size:14px;line-height:14px;color:#2b2b2b;font-weight:400;white-space:nowrap;transform:scaleX(1.0452);transform-origin:0 0;">N/A</div>
<div id="t107" style="position:absolute;left:718.30px;top:660.95px;font-size:14px;line-height:14px;color:#2b2b2b;font-weight:400;white-space:nowrap;transform:scaleX(1.0452);transform-origin:0 0;">N/A</div>
<div id="t108" style="position:absolute;left:870.85px;top:660.95px;font-size:14px;line-height:14px;color:#2b2b2b;font-weight:400;white-space:nowrap;transform:scaleX(0.9619);transform-origin:0 0;">0</div>
<div id="t109" style="position:absolute;left:1005.40px;top:660.95px;font-size:14px;line-height:14px;color:#2b2b2b;font-weight:400;white-space:nowrap;transform:scaleX(1.0112);transform-origin:0 0;">Not Managed</div>
<div id="t110" style="position:absolute;left:1400.85px;top:660.95px;font-size:14px;line-height:14px;color:#a6a6a6;font-weight:400;white-space:nowrap;transform:scaleX(0.9619);transform-origin:0 0;">0</div>
<div id="t111" style="position:absolute;left:1473.50px;top:660.95px;font-size:14px;line-height:14px;color:#2b2b2b;font-weight:400;white-space:nowrap;transform:scaleX(0.9760);transform-origin:0 0;">Unspecified</div>
<div id="t112" style="position:absolute;left:1581.30px;top:660.95px;font-size:14px;line-height:14px;color:#2b2b2b;font-weight:400;white-space:nowrap;transform:scaleX(1.0452);transform-origin:0 0;">N/A</div>
<div id="t113" style="position:absolute;left:1699.30px;top:660.95px;font-size:14px;line-height:14px;color:#2b2b2b;font-weight:400;white-space:nowrap;transform:scaleX(1.0452);transform-origin:0 0;">N/A</div>
<div id="t114" style="position:absolute;left:1893.60px;top:660.95px;font-size:14px;line-height:14px;color:#2b2b2b;font-weight:400;white-space:nowrap;transform:scaleX(0.9896);transform-origin:0 0;">Default</div>
<div style="position:absolute;left:40.9px;top:694.8px;width:12.0px;height:12.0px;box-sizing:border-box;border:1.3px solid #cdcdcd;border-radius:2px;"></div>
<div style="position:absolute;left:19px;top:717px;width:1944px;height:1px;box-sizing:border-box;background:#e6e6e6;"></div>
<div id="t115" style="position:absolute;left:74.70px;top:694.95px;font-size:14px;line-height:14px;color:#2b2b2b;font-weight:400;white-space:nowrap;transform:scaleX(1.0031);transform-origin:0 0;">dpij1rr63yafbmcdyyuk</div>
<div id="t116" style="position:absolute;left:248.80px;top:694.95px;font-size:14px;line-height:14px;color:#2b2b2b;font-weight:400;white-space:nowrap;transform:scaleX(0.9753);transform-origin:0 0;">DPILAB\dpij1rr63yafbmc...</div>
<div id="t117" style="position:absolute;left:445.00px;top:694.95px;font-size:14px;line-height:14px;color:#2b2b2b;font-weight:400;white-space:nowrap;transform:scaleX(0.9167);transform-origin:0 0;">User</div>
<div id="t118" style="position:absolute;left:569.20px;top:694.95px;font-size:14px;line-height:14px;color:#2b2b2b;font-weight:400;white-space:nowrap;transform:scaleX(1.0452);transform-origin:0 0;">N/A</div>
<div id="t119" style="position:absolute;left:718.30px;top:694.95px;font-size:14px;line-height:14px;color:#2b2b2b;font-weight:400;white-space:nowrap;transform:scaleX(1.0452);transform-origin:0 0;">N/A</div>
<div id="t120" style="position:absolute;left:870.85px;top:694.95px;font-size:14px;line-height:14px;color:#2b2b2b;font-weight:400;white-space:nowrap;transform:scaleX(0.9619);transform-origin:0 0;">0</div>
<div id="t121" style="position:absolute;left:1005.40px;top:694.95px;font-size:14px;line-height:14px;color:#2b2b2b;font-weight:400;white-space:nowrap;transform:scaleX(1.0112);transform-origin:0 0;">Not Managed</div>
<div id="t122" style="position:absolute;left:1400.85px;top:694.95px;font-size:14px;line-height:14px;color:#a6a6a6;font-weight:400;white-space:nowrap;transform:scaleX(0.9619);transform-origin:0 0;">0</div>
<div id="t123" style="position:absolute;left:1473.50px;top:694.95px;font-size:14px;line-height:14px;color:#2b2b2b;font-weight:400;white-space:nowrap;transform:scaleX(0.9760);transform-origin:0 0;">Unspecified</div>
<div id="t124" style="position:absolute;left:1581.30px;top:694.95px;font-size:14px;line-height:14px;color:#2b2b2b;font-weight:400;white-space:nowrap;transform:scaleX(1.0452);transform-origin:0 0;">N/A</div>
<div id="t125" style="position:absolute;left:1699.30px;top:694.95px;font-size:14px;line-height:14px;color:#2b2b2b;font-weight:400;white-space:nowrap;transform:scaleX(1.0452);transform-origin:0 0;">N/A</div>
<div id="t126" style="position:absolute;left:1893.60px;top:694.95px;font-size:14px;line-height:14px;color:#2b2b2b;font-weight:400;white-space:nowrap;transform:scaleX(0.9896);transform-origin:0 0;">Default</div>
<div style="position:absolute;left:40.9px;top:728.8px;width:12.0px;height:12.0px;box-sizing:border-box;border:1.3px solid #cdcdcd;border-radius:2px;"></div>
<div style="position:absolute;left:19px;top:751px;width:1944px;height:1px;box-sizing:border-box;background:#e6e6e6;"></div>
<div id="t127" style="position:absolute;left:74.70px;top:728.95px;font-size:14px;line-height:14px;color:#2b2b2b;font-weight:400;white-space:nowrap;transform:scaleX(0.9966);transform-origin:0 0;">dpio0dh1824wtvxdj...</div>
<div id="t128" style="position:absolute;left:248.80px;top:728.95px;font-size:14px;line-height:14px;color:#2b2b2b;font-weight:400;white-space:nowrap;transform:scaleX(0.9823);transform-origin:0 0;">DPILAB\dpio0dh1824wt...</div>
<div id="t129" style="position:absolute;left:445.00px;top:728.95px;font-size:14px;line-height:14px;color:#2b2b2b;font-weight:400;white-space:nowrap;transform:scaleX(0.9167);transform-origin:0 0;">User</div>
<div id="t130" style="position:absolute;left:569.20px;top:728.95px;font-size:14px;line-height:14px;color:#2b2b2b;font-weight:400;white-space:nowrap;transform:scaleX(1.0452);transform-origin:0 0;">N/A</div>
<div id="t131" style="position:absolute;left:718.30px;top:728.95px;font-size:14px;line-height:14px;color:#2b2b2b;font-weight:400;white-space:nowrap;transform:scaleX(1.0452);transform-origin:0 0;">N/A</div>
<div id="t132" style="position:absolute;left:870.85px;top:728.95px;font-size:14px;line-height:14px;color:#2b2b2b;font-weight:400;white-space:nowrap;transform:scaleX(0.9619);transform-origin:0 0;">0</div>
<div id="t133" style="position:absolute;left:1005.40px;top:728.95px;font-size:14px;line-height:14px;color:#2b2b2b;font-weight:400;white-space:nowrap;transform:scaleX(1.0112);transform-origin:0 0;">Not Managed</div>
<div id="t134" style="position:absolute;left:1400.85px;top:728.95px;font-size:14px;line-height:14px;color:#a6a6a6;font-weight:400;white-space:nowrap;transform:scaleX(0.9619);transform-origin:0 0;">0</div>
<div id="t135" style="position:absolute;left:1473.50px;top:728.95px;font-size:14px;line-height:14px;color:#2b2b2b;font-weight:400;white-space:nowrap;transform:scaleX(0.9760);transform-origin:0 0;">Unspecified</div>
<div id="t136" style="position:absolute;left:1581.30px;top:728.95px;font-size:14px;line-height:14px;color:#2b2b2b;font-weight:400;white-space:nowrap;transform:scaleX(1.0452);transform-origin:0 0;">N/A</div>
<div id="t137" style="position:absolute;left:1699.30px;top:728.95px;font-size:14px;line-height:14px;color:#2b2b2b;font-weight:400;white-space:nowrap;transform:scaleX(1.0452);transform-origin:0 0;">N/A</div>
<div id="t138" style="position:absolute;left:1893.60px;top:728.95px;font-size:14px;line-height:14px;color:#2b2b2b;font-weight:400;white-space:nowrap;transform:scaleX(0.9896);transform-origin:0 0;">Default</div>
<div style="position:absolute;left:40.9px;top:762.8px;width:12.0px;height:12.0px;box-sizing:border-box;border:1.3px solid #cdcdcd;border-radius:2px;"></div>
<div style="position:absolute;left:19px;top:785px;width:1944px;height:1px;box-sizing:border-box;background:#e6e6e6;"></div>
<div id="t139" style="position:absolute;left:74.70px;top:762.95px;font-size:14px;line-height:14px;color:#2b2b2b;font-weight:400;white-space:nowrap;transform:scaleX(0.9002);transform-origin:0 0;">dpiP0BKRBYHIEVT96...</div>
<div id="t140" style="position:absolute;left:248.80px;top:762.95px;font-size:14px;line-height:14px;color:#2b2b2b;font-weight:400;white-space:nowrap;transform:scaleX(0.9106);transform-origin:0 0;">DPILAB\dpiP0BKRBYHIE...</div>
<div id="t141" style="position:absolute;left:445.00px;top:762.95px;font-size:14px;line-height:14px;color:#2b2b2b;font-weight:400;white-space:nowrap;transform:scaleX(0.9167);transform-origin:0 0;">User</div>
<div id="t142" style="position:absolute;left:569.20px;top:762.95px;font-size:14px;line-height:14px;color:#2b2b2b;font-weight:400;white-space:nowrap;transform:scaleX(1.0452);transform-origin:0 0;">N/A</div>
<div id="t143" style="position:absolute;left:718.30px;top:762.95px;font-size:14px;line-height:14px;color:#2b2b2b;font-weight:400;white-space:nowrap;transform:scaleX(1.0452);transform-origin:0 0;">N/A</div>
<div id="t144" style="position:absolute;left:870.85px;top:762.95px;font-size:14px;line-height:14px;color:#2b2b2b;font-weight:400;white-space:nowrap;transform:scaleX(0.9619);transform-origin:0 0;">0</div>
<div id="t145" style="position:absolute;left:1005.40px;top:762.95px;font-size:14px;line-height:14px;color:#2b2b2b;font-weight:400;white-space:nowrap;transform:scaleX(1.0112);transform-origin:0 0;">Not Managed</div>
<div id="t146" style="position:absolute;left:1400.85px;top:762.95px;font-size:14px;line-height:14px;color:#a6a6a6;font-weight:400;white-space:nowrap;transform:scaleX(0.9619);transform-origin:0 0;">0</div>
<div id="t147" style="position:absolute;left:1473.50px;top:762.95px;font-size:14px;line-height:14px;color:#2b2b2b;font-weight:400;white-space:nowrap;transform:scaleX(0.9760);transform-origin:0 0;">Unspecified</div>
<div id="t148" style="position:absolute;left:1581.30px;top:762.95px;font-size:14px;line-height:14px;color:#2b2b2b;font-weight:400;white-space:nowrap;transform:scaleX(1.0452);transform-origin:0 0;">N/A</div>
<div id="t149" style="position:absolute;left:1699.30px;top:762.95px;font-size:14px;line-height:14px;color:#2b2b2b;font-weight:400;white-space:nowrap;transform:scaleX(1.0452);transform-origin:0 0;">N/A</div>
<div id="t150" style="position:absolute;left:1893.60px;top:762.95px;font-size:14px;line-height:14px;color:#2b2b2b;font-weight:400;white-space:nowrap;transform:scaleX(0.9896);transform-origin:0 0;">Default</div>
<div style="position:absolute;left:40.9px;top:796.8px;width:12.0px;height:12.0px;box-sizing:border-box;border:1.3px solid #cdcdcd;border-radius:2px;"></div>
<div style="position:absolute;left:19px;top:819px;width:1944px;height:1px;box-sizing:border-box;background:#e6e6e6;"></div>
<div id="t151" style="position:absolute;left:74.70px;top:796.95px;font-size:14px;line-height:14px;color:#2b2b2b;font-weight:400;white-space:nowrap;transform:scaleX(0.9288);transform-origin:0 0;">Guest</div>
<div id="t152" style="position:absolute;left:248.80px;top:796.95px;font-size:14px;line-height:14px;color:#2b2b2b;font-weight:400;white-space:nowrap;transform:scaleX(0.9457);transform-origin:0 0;">DPILAB\Guest</div>
<div id="t153" style="position:absolute;left:445.00px;top:796.95px;font-size:14px;line-height:14px;color:#2b2b2b;font-weight:400;white-space:nowrap;transform:scaleX(0.9167);transform-origin:0 0;">User</div>
<div id="t154" style="position:absolute;left:569.20px;top:796.95px;font-size:14px;line-height:14px;color:#2b2b2b;font-weight:400;white-space:nowrap;transform:scaleX(1.0452);transform-origin:0 0;">N/A</div>
<div id="t155" style="position:absolute;left:718.30px;top:796.95px;font-size:14px;line-height:14px;color:#2b2b2b;font-weight:400;white-space:nowrap;transform:scaleX(1.0452);transform-origin:0 0;">N/A</div>
<div id="t156" style="position:absolute;left:870.85px;top:796.95px;font-size:14px;line-height:14px;color:#2b2b2b;font-weight:400;white-space:nowrap;transform:scaleX(0.9619);transform-origin:0 0;">0</div>
<div id="t157" style="position:absolute;left:1005.40px;top:796.95px;font-size:14px;line-height:14px;color:#2b2b2b;font-weight:400;white-space:nowrap;transform:scaleX(1.0112);transform-origin:0 0;">Not Managed</div>
<div id="t158" style="position:absolute;left:1400.85px;top:796.95px;font-size:14px;line-height:14px;color:#a6a6a6;font-weight:400;white-space:nowrap;transform:scaleX(0.9619);transform-origin:0 0;">0</div>
<div id="t159" style="position:absolute;left:1473.50px;top:796.95px;font-size:14px;line-height:14px;color:#2b2b2b;font-weight:400;white-space:nowrap;transform:scaleX(0.9760);transform-origin:0 0;">Unspecified</div>
<div id="t160" style="position:absolute;left:1581.30px;top:796.95px;font-size:14px;line-height:14px;color:#2b2b2b;font-weight:400;white-space:nowrap;transform:scaleX(1.0452);transform-origin:0 0;">N/A</div>
<div id="t161" style="position:absolute;left:1699.30px;top:796.95px;font-size:14px;line-height:14px;color:#2b2b2b;font-weight:400;white-space:nowrap;transform:scaleX(1.0452);transform-origin:0 0;">N/A</div>
<div id="t162" style="position:absolute;left:1893.60px;top:796.95px;font-size:14px;line-height:14px;color:#2b2b2b;font-weight:400;white-space:nowrap;transform:scaleX(0.9896);transform-origin:0 0;">Default</div>
<div style="position:absolute;left:40.9px;top:830.8px;width:12.0px;height:12.0px;box-sizing:border-box;border:1.3px solid #cdcdcd;border-radius:2px;"></div>
<div style="position:absolute;left:19px;top:853px;width:1944px;height:1px;box-sizing:border-box;background:#e6e6e6;"></div>
<div id="t163" style="position:absolute;left:74.70px;top:830.95px;font-size:14px;line-height:14px;color:#2b2b2b;font-weight:400;white-space:nowrap;transform:scaleX(1.0595);transform-origin:0 0;">krbtgt</div>
<div id="t164" style="position:absolute;left:248.80px;top:830.95px;font-size:14px;line-height:14px;color:#2b2b2b;font-weight:400;white-space:nowrap;transform:scaleX(0.9921);transform-origin:0 0;">DPILAB\krbtgt</div>
<div id="t165" style="position:absolute;left:445.00px;top:830.95px;font-size:14px;line-height:14px;color:#2b2b2b;font-weight:400;white-space:nowrap;transform:scaleX(0.9167);transform-origin:0 0;">User</div>
<div id="t166" style="position:absolute;left:569.20px;top:830.95px;font-size:14px;line-height:14px;color:#2b2b2b;font-weight:400;white-space:nowrap;transform:scaleX(1.0452);transform-origin:0 0;">N/A</div>
<div id="t167" style="position:absolute;left:718.30px;top:830.95px;font-size:14px;line-height:14px;color:#2b2b2b;font-weight:400;white-space:nowrap;transform:scaleX(1.0452);transform-origin:0 0;">N/A</div>
<div id="t168" style="position:absolute;left:870.85px;top:830.95px;font-size:14px;line-height:14px;color:#2b2b2b;font-weight:400;white-space:nowrap;transform:scaleX(0.9619);transform-origin:0 0;">0</div>
<div id="t169" style="position:absolute;left:1005.40px;top:830.95px;font-size:14px;line-height:14px;color:#2b2b2b;font-weight:400;white-space:nowrap;transform:scaleX(1.0112);transform-origin:0 0;">Not Managed</div>
<div id="t170" style="position:absolute;left:1400.85px;top:830.95px;font-size:14px;line-height:14px;color:#a6a6a6;font-weight:400;white-space:nowrap;transform:scaleX(0.9619);transform-origin:0 0;">0</div>
<div id="t171" style="position:absolute;left:1473.50px;top:830.95px;font-size:14px;line-height:14px;color:#2b2b2b;font-weight:400;white-space:nowrap;transform:scaleX(0.9760);transform-origin:0 0;">Unspecified</div>
<div id="t172" style="position:absolute;left:1581.30px;top:830.95px;font-size:14px;line-height:14px;color:#2b2b2b;font-weight:400;white-space:nowrap;transform:scaleX(1.0452);transform-origin:0 0;">N/A</div>
<div id="t173" style="position:absolute;left:1699.30px;top:830.95px;font-size:14px;line-height:14px;color:#2b2b2b;font-weight:400;white-space:nowrap;transform:scaleX(1.0452);transform-origin:0 0;">N/A</div>
<div id="t174" style="position:absolute;left:1893.60px;top:830.95px;font-size:14px;line-height:14px;color:#2b2b2b;font-weight:400;white-space:nowrap;transform:scaleX(0.9896);transform-origin:0 0;">Default</div>
<div style="position:absolute;left:40.9px;top:864.8px;width:12.0px;height:12.0px;box-sizing:border-box;border:1.3px solid #cdcdcd;border-radius:2px;"></div>
<div style="position:absolute;left:22.7px;top:887px;width:1940.3px;height:1px;box-sizing:border-box;background:#e6e6e6;"></div>
<div id="t175" style="position:absolute;left:74.70px;top:864.95px;font-size:14px;line-height:14px;color:#2b2b2b;font-weight:400;white-space:nowrap;transform:scaleX(0.9544);transform-origin:0 0;">NPS Service Account</div>
<div id="t176" style="position:absolute;left:248.80px;top:864.95px;font-size:14px;line-height:14px;color:#2b2b2b;font-weight:400;white-space:nowrap;transform:scaleX(0.9352);transform-origin:0 0;">DPILAB\nps.svc</div>
<div id="t177" style="position:absolute;left:445.00px;top:864.95px;font-size:14px;line-height:14px;color:#2b2b2b;font-weight:400;white-space:nowrap;transform:scaleX(0.9881);transform-origin:0 0;">Domain Ad...</div>
<div id="t178" style="position:absolute;left:569.20px;top:864.95px;font-size:14px;line-height:14px;color:#2b2b2b;font-weight:400;white-space:nowrap;transform:scaleX(0.9833);transform-origin:0 0;">11/22/2025 4:00 ...</div>
<div id="t179" style="position:absolute;left:718.30px;top:864.95px;font-size:14px;line-height:14px;color:#2b2b2b;font-weight:400;white-space:nowrap;transform:scaleX(0.9735);transform-origin:0 0;">12/1/2025 4:49 ...</div>
<div id="t180" style="position:absolute;left:867.20px;top:864.95px;font-size:14px;line-height:14px;color:#2b2b2b;font-weight:400;white-space:nowrap;transform:scaleX(0.9501);transform-origin:0 0;">28</div>
<div id="t181" style="position:absolute;left:1016.00px;top:864.95px;font-size:14px;line-height:14px;color:#2b2b2b;font-weight:400;white-space:nowrap;transform:scaleX(1.0249);transform-origin:0 0;">Automatic</div>
<div id="t182" style="position:absolute;left:1153.95px;top:864.95px;font-size:14px;line-height:14px;color:#2b2b2b;font-weight:400;white-space:nowrap;transform:scaleX(0.8778);transform-origin:0 0;">Yes | Yes</div>
<div id="t183" style="position:absolute;left:1291.35px;top:864.95px;font-size:14px;line-height:14px;color:#2b2b2b;font-weight:400;white-space:nowrap;transform:scaleX(0.9885);transform-origin:0 0;">No</div>
<div id="t184" style="position:absolute;left:1400.85px;top:864.95px;font-size:14px;line-height:14px;color:#a6a6a6;font-weight:400;white-space:nowrap;transform:scaleX(0.9619);transform-origin:0 0;">0</div>
<div id="t185" style="position:absolute;left:1481.65px;top:864.95px;font-size:14px;line-height:14px;color:#2b2b2b;font-weight:400;white-space:nowrap;transform:scaleX(0.9696);transform-origin:0 0;">Changed</div>
<div id="t186" style="position:absolute;left:1581.30px;top:864.95px;font-size:14px;line-height:14px;color:#2b2b2b;font-weight:400;white-space:nowrap;transform:scaleX(0.9917);transform-origin:0 0;">12/1/2025 ...</div>
<div id="t187" style="position:absolute;left:1699.30px;top:864.95px;font-size:14px;line-height:14px;color:#2b2b2b;font-weight:400;white-space:nowrap;transform:scaleX(1.0452);transform-origin:0 0;">N/A</div>
<div id="t188" style="position:absolute;left:1893.60px;top:864.95px;font-size:14px;line-height:14px;color:#2b2b2b;font-weight:400;white-space:nowrap;transform:scaleX(0.9896);transform-origin:0 0;">Default</div>
<div style="position:absolute;left:40.6px;top:898.3px;width:12.699999999999996px;height:12.700000000000045px;box-sizing:border-box;background:#2f63d6;border-radius:2.5px;"></div>
<svg style="position:absolute;left:40.6px;top:898.3px" width="13" height="13" viewBox="0 0 13 13"><path d="M3.1 6.3 L5.4 8.4 L9 4.3" fill="none" stroke="#fff" stroke-width="1.5" stroke-linecap="round" stroke-linejoin="round"/></svg>
<div style="position:absolute;left:18.4px;top:888.2px;width:4.400000000000002px;height:33.5px;box-sizing:border-box;background:#2f5fd0;border-radius:1.5px;"></div>
<div style="position:absolute;left:22.7px;top:921px;width:1940.3px;height:1px;box-sizing:border-box;background:#e6e6e6;"></div>
<div id="t189" style="position:absolute;left:74.70px;top:898.95px;font-size:14px;line-height:14px;color:#2b2b2b;font-weight:400;white-space:nowrap;transform:scaleX(0.9725);transform-origin:0 0;">PAM Service Account</div>
<div id="t190" style="position:absolute;left:248.80px;top:898.95px;font-size:14px;line-height:14px;color:#2b2b2b;font-weight:400;white-space:nowrap;transform:scaleX(0.9440);transform-origin:0 0;">DPILAB\pam.svc</div>
<div id="t191" style="position:absolute;left:445.00px;top:898.95px;font-size:14px;line-height:14px;color:#2b2b2b;font-weight:400;white-space:nowrap;transform:scaleX(0.9881);transform-origin:0 0;">Domain Ad...</div>
<div id="t192" style="position:absolute;left:569.20px;top:898.95px;font-size:14px;line-height:14px;color:#2b2b2b;font-weight:400;white-space:nowrap;transform:scaleX(0.9833);transform-origin:0 0;">11/26/2025 4:00 ...</div>
<div id="t193" style="position:absolute;left:718.30px;top:898.95px;font-size:14px;line-height:14px;color:#2b2b2b;font-weight:400;white-space:nowrap;transform:scaleX(1.0452);transform-origin:0 0;">N/A</div>
<div id="t194" style="position:absolute;left:870.85px;top:898.95px;font-size:14px;line-height:14px;color:#2b2b2b;font-weight:400;white-space:nowrap;transform:scaleX(0.9619);transform-origin:0 0;">0</div>
<div id="t195" style="position:absolute;left:1016.00px;top:898.95px;font-size:14px;line-height:14px;color:#2b2b2b;font-weight:400;white-space:nowrap;transform:scaleX(1.0249);transform-origin:0 0;">Automatic</div>
<div id="t196" style="position:absolute;left:1153.95px;top:898.95px;font-size:14px;line-height:14px;color:#2b2b2b;font-weight:400;white-space:nowrap;transform:scaleX(0.8778);transform-origin:0 0;">Yes | Yes</div>
<div id="t197" style="position:absolute;left:1291.35px;top:898.95px;font-size:14px;line-height:14px;color:#2b2b2b;font-weight:400;white-space:nowrap;transform:scaleX(0.9885);transform-origin:0 0;">No</div>
<div id="t198" style="position:absolute;left:1400.85px;top:898.95px;font-size:14px;line-height:14px;color:#a6a6a6;font-weight:400;white-space:nowrap;transform:scaleX(0.9619);transform-origin:0 0;">0</div>
<div id="t199" style="position:absolute;left:1491.80px;top:898.95px;font-size:14px;line-height:14px;color:#2b2b2b;font-weight:400;white-space:nowrap;transform:scaleX(0.9124);transform-origin:0 0;">Failed</div>
<div id="t200" style="position:absolute;left:1581.30px;top:898.95px;font-size:14px;line-height:14px;color:#2b2b2b;font-weight:400;white-space:nowrap;transform:scaleX(1.0452);transform-origin:0 0;">N/A</div>
<div id="t201" style="position:absolute;left:1699.30px;top:898.95px;font-size:14px;line-height:14px;color:#2b2b2b;font-weight:400;white-space:nowrap;transform:scaleX(1.0452);transform-origin:0 0;">N/A</div>
<div id="t202" style="position:absolute;left:1893.60px;top:898.95px;font-size:14px;line-height:14px;color:#2b2b2b;font-weight:400;white-space:nowrap;transform:scaleX(0.9896);transform-origin:0 0;">Default</div>
<div style="position:absolute;left:40.9px;top:932.8px;width:12.0px;height:12.0px;box-sizing:border-box;border:1.3px solid #cdcdcd;border-radius:2px;"></div>
<div style="position:absolute;left:19px;top:955px;width:1944px;height:1px;box-sizing:border-box;background:#e6e6e6;"></div>
<div id="t203" style="position:absolute;left:74.70px;top:932.95px;font-size:14px;line-height:14px;color:#2b2b2b;font-weight:400;white-space:nowrap;transform:scaleX(0.9305);transform-origin:0 0;">Richard UserS288DK...</div>
<div id="t204" style="position:absolute;left:248.80px;top:932.95px;font-size:14px;line-height:14px;color:#2b2b2b;font-weight:400;white-space:nowrap;transform:scaleX(0.9356);transform-origin:0 0;">DPILAB\Richard UserS28...</div>
<div id="t205" style="position:absolute;left:445.00px;top:932.95px;font-size:14px;line-height:14px;color:#2b2b2b;font-weight:400;white-space:nowrap;transform:scaleX(0.9892);transform-origin:0 0;">Not Set</div>
<div id="t206" style="position:absolute;left:569.20px;top:932.95px;font-size:14px;line-height:14px;color:#2b2b2b;font-weight:400;white-space:nowrap;transform:scaleX(1.0452);transform-origin:0 0;">N/A</div>
<div id="t207" style="position:absolute;left:718.30px;top:932.95px;font-size:14px;line-height:14px;color:#2b2b2b;font-weight:400;white-space:nowrap;transform:scaleX(1.0452);transform-origin:0 0;">N/A</div>
<div id="t208" style="position:absolute;left:870.85px;top:932.95px;font-size:14px;line-height:14px;color:#2b2b2b;font-weight:400;white-space:nowrap;transform:scaleX(0.9619);transform-origin:0 0;">0</div>
<div id="t209" style="position:absolute;left:1005.40px;top:932.95px;font-size:14px;line-height:14px;color:#2b2b2b;font-weight:400;white-space:nowrap;transform:scaleX(1.0112);transform-origin:0 0;">Not Managed</div>
<div id="t210" style="position:absolute;left:1400.85px;top:932.95px;font-size:14px;line-height:14px;color:#a6a6a6;font-weight:400;white-space:nowrap;transform:scaleX(0.9619);transform-origin:0 0;">0</div>
<div id="t211" style="position:absolute;left:1473.50px;top:932.95px;font-size:14px;line-height:14px;color:#2b2b2b;font-weight:400;white-space:nowrap;transform:scaleX(0.9760);transform-origin:0 0;">Unspecified</div>
<div id="t212" style="position:absolute;left:1581.30px;top:932.95px;font-size:14px;line-height:14px;color:#2b2b2b;font-weight:400;white-space:nowrap;transform:scaleX(1.0452);transform-origin:0 0;">N/A</div>
<div id="t213" style="position:absolute;left:1699.30px;top:932.95px;font-size:14px;line-height:14px;color:#2b2b2b;font-weight:400;white-space:nowrap;transform:scaleX(1.0452);transform-origin:0 0;">N/A</div>
<div id="t214" style="position:absolute;left:1893.60px;top:932.95px;font-size:14px;line-height:14px;color:#2b2b2b;font-weight:400;white-space:nowrap;transform:scaleX(0.9896);transform-origin:0 0;">Default</div>
<div style="position:absolute;left:40.9px;top:966.8px;width:12.0px;height:12.0px;box-sizing:border-box;border:1.3px solid #cdcdcd;border-radius:2px;"></div>
<div id="t215" style="position:absolute;left:74.70px;top:966.95px;font-size:14px;line-height:14px;color:#2b2b2b;font-weight:400;white-space:nowrap;transform:scaleX(0.9670);transform-origin:0 0;">Tomasz Malik</div>
<div id="t216" style="position:absolute;left:248.80px;top:966.95px;font-size:14px;line-height:14px;color:#2b2b2b;font-weight:400;white-space:nowrap;transform:scaleX(0.9617);transform-origin:0 0;">DPILAB\tm</div>
<div id="t217" style="position:absolute;left:445.00px;top:966.95px;font-size:14px;line-height:14px;color:#2b2b2b;font-weight:400;white-space:nowrap;transform:scaleX(0.9167);transform-origin:0 0;">User</div>
<div id="t218" style="position:absolute;left:569.20px;top:966.95px;font-size:14px;line-height:14px;color:#2b2b2b;font-weight:400;white-space:nowrap;transform:scaleX(0.9923);transform-origin:0 0;">11/26/2025 6:11 ...</div>
<div id="t219" style="position:absolute;left:718.30px;top:966.95px;font-size:14px;line-height:14px;color:#2b2b2b;font-weight:400;white-space:nowrap;transform:scaleX(1.0452);transform-origin:0 0;">N/A</div>
<div id="t220" style="position:absolute;left:870.85px;top:966.95px;font-size:14px;line-height:14px;color:#2b2b2b;font-weight:400;white-space:nowrap;transform:scaleX(0.9619);transform-origin:0 0;">0</div>
<div id="t221" style="position:absolute;left:1005.40px;top:966.95px;font-size:14px;line-height:14px;color:#2b2b2b;font-weight:400;white-space:nowrap;transform:scaleX(1.0112);transform-origin:0 0;">Not Managed</div>
<div id="t222" style="position:absolute;left:1400.85px;top:966.95px;font-size:14px;line-height:14px;color:#a6a6a6;font-weight:400;white-space:nowrap;transform:scaleX(0.9619);transform-origin:0 0;">0</div>
<div id="t223" style="position:absolute;left:1473.50px;top:966.95px;font-size:14px;line-height:14px;color:#2b2b2b;font-weight:400;white-space:nowrap;transform:scaleX(0.9760);transform-origin:0 0;">Unspecified</div>
<div id="t224" style="position:absolute;left:1581.30px;top:966.95px;font-size:14px;line-height:14px;color:#2b2b2b;font-weight:400;white-space:nowrap;transform:scaleX(1.0452);transform-origin:0 0;">N/A</div>
<div id="t225" style="position:absolute;left:1699.30px;top:966.95px;font-size:14px;line-height:14px;color:#2b2b2b;font-weight:400;white-space:nowrap;transform:scaleX(1.0452);transform-origin:0 0;">N/A</div>
<div id="t226" style="position:absolute;left:1893.60px;top:966.95px;font-size:14px;line-height:14px;color:#2b2b2b;font-weight:400;white-space:nowrap;transform:scaleX(0.9896);transform-origin:0 0;">Default</div>
<div style="position:absolute;left:1963.8px;top:482.1px;width:12.600000000000136px;height:507.9px;box-sizing:border-box;border:1px solid #e0e0e0;border-radius:6px;background:#fff;"></div>
<div style="position:absolute;left:1964px;top:519px;width:12px;height:470.5px;box-sizing:border-box;background:#d3d3d3;border-radius:6px;"></div>
<div style="position:absolute;left:1977px;top:0px;width:2px;height:1004px;box-sizing:border-box;background:linear-gradient(to right,#7d8ab8 0 50%,#0f2877 50%);"></div>
<div style="position:absolute;left:0px;top:990px;width:1963px;height:14px;box-sizing:border-box;background:#fff;border:1px solid #e2e2e2;border-left:none;border-radius:0 7px 7px 0;"></div>
<div style="position:absolute;left:0px;top:990px;width:1919px;height:14px;box-sizing:border-box;background:linear-gradient(to bottom,#e2e2e2 0 1px,#bdbdbd 1px 2px,#d5d5d5 2px);border-radius:0 7px 7px 0;"></div>
<div id="t227" style="position:absolute;left:1832.80px;top:961.87px;font-size:20px;line-height:20px;color:rgba(165,165,165,0.5);font-weight:400;white-space:nowrap;transform:scaleX(1.0137);transform-origin:0 0;">Activate Windows</div>
<div id="t228" style="position:absolute;left:1833.00px;top:986.73px;font-size:14.5px;line-height:14.5px;color:rgba(165,165,165,0.5);font-weight:400;white-space:nowrap;transform:scaleX(1.0048);transform-origin:0 0;">Go to Settings to activate Windows.</div>
</body></html>
